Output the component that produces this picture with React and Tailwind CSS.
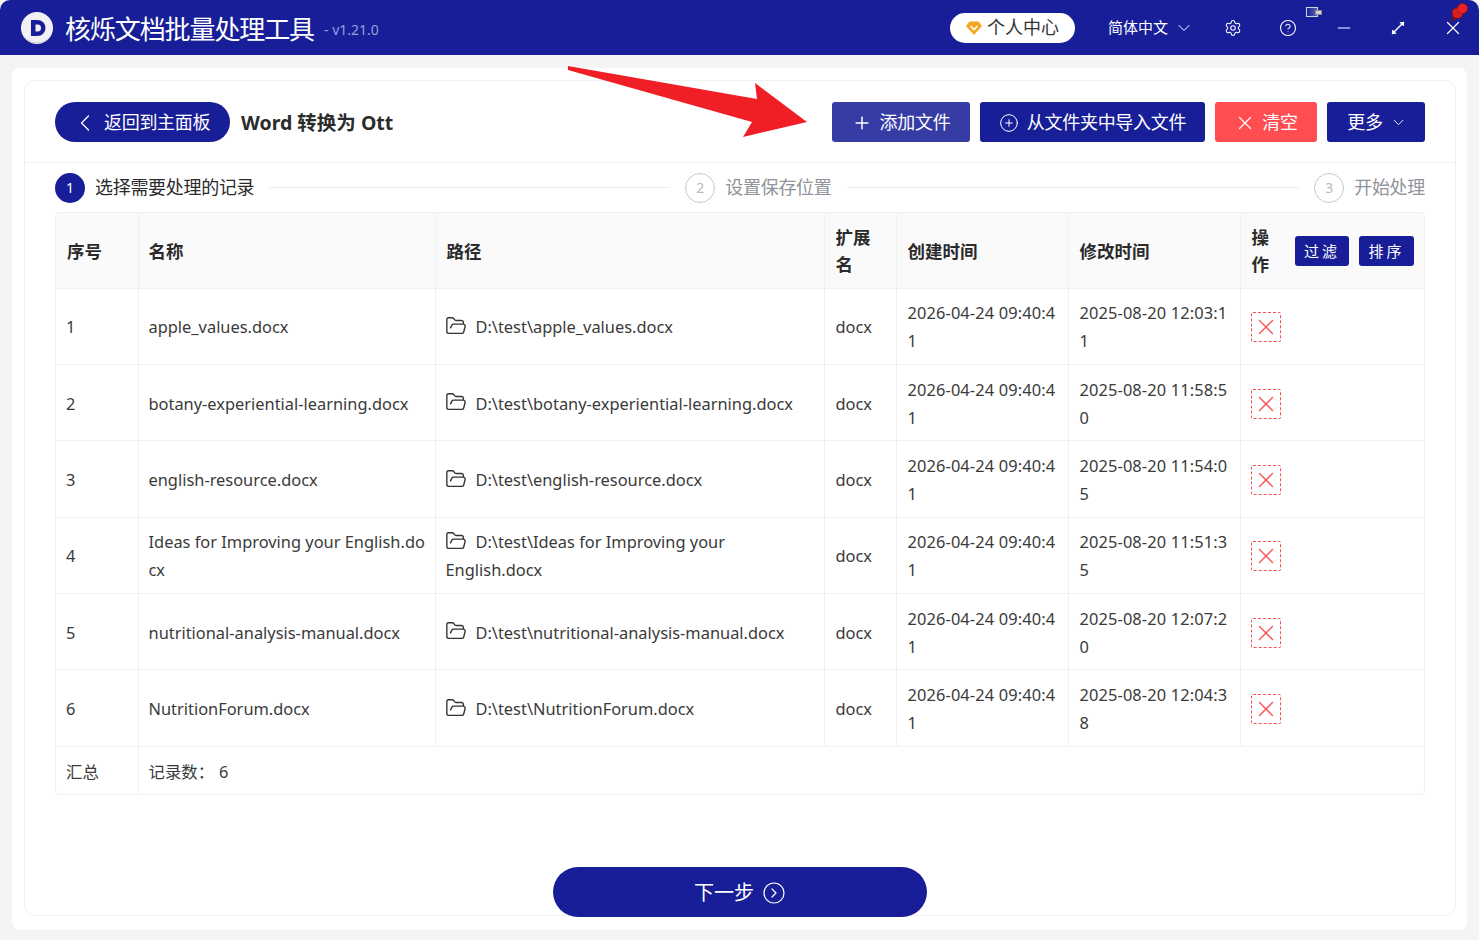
import { ChevronLeft, ChevronDown, Settings, CircleHelp, Minus, X, Plus, CirclePlus, FolderOpen, CircleChevronRight } from 'lucide-react'

const FONT = 'font-["Noto_Sans","Noto_Sans_CJK_SC",sans-serif]'

const rows = [
  { id: 1, name: 'apple_values.docx', path: 'D:\\test\\apple_values.docx', created: '2026-04-24 09:40:41', modified: '2025-08-20 12:03:11' },
  { id: 2, name: 'botany-experiential-learning.docx', path: 'D:\\test\\botany-experiential-learning.docx', created: '2026-04-24 09:40:41', modified: '2025-08-20 11:58:50' },
  { id: 3, name: 'english-resource.docx', path: 'D:\\test\\english-resource.docx', created: '2026-04-24 09:40:41', modified: '2025-08-20 11:54:05' },
  { id: 4, name: 'Ideas for Improving your English.docx', path: 'D:\\test\\Ideas for Improving your English.docx', created: '2026-04-24 09:40:41', modified: '2025-08-20 11:51:35' },
  { id: 5, name: 'nutritional-analysis-manual.docx', path: 'D:\\test\\nutritional-analysis-manual.docx', created: '2026-04-24 09:40:41', modified: '2025-08-20 12:07:20' },
  { id: 6, name: 'NutritionForum.docx', path: 'D:\\test\\NutritionForum.docx', created: '2026-04-24 09:40:41', modified: '2025-08-20 12:04:38' },
]

function Logo() {
  return (
    <svg width="34" height="34" viewBox="0 0 34 34" className="shrink-0">
      <circle cx="17" cy="17" r="16" fill="#f1f1f4" />
      <path d="M3 24a16 16 0 0 0 28 0a17 17 0 0 1-28 0z" fill="#c9c9d0" />
      <path d="M11 9h6.5a8 8 0 0 1 0 16H11z" fill="#181e97" />
      <path d="M15.5 13.5h2a3.5 3.5 0 0 1 0 7h-2z" fill="#f1f1f4" />
    </svg>
  )
}

function Step({ n, label, active }) {
  return (
    <div className="flex items-center shrink-0">
      <div className={`w-[30px] h-[30px] rounded-full flex items-center justify-center text-[14px] ${active ? 'bg-[#181e97] text-white' : 'border border-[#c8c8c8] text-[#bbbbbb]'}`}>{n}</div>
      <span className={`ml-[10px] text-[18px] tracking-[-0.3px] ${active ? 'text-[#2b2b2b]' : 'text-[#909399]'}`}>{label}</span>
    </div>
  )
}

export default function App() {
  const th = 'border-r border-[#f0f0f0] pr-[10px] pt-[2px] text-left font-bold text-[17.5px] text-[#2b2b2b] leading-[27px]'
  const cell = 'border-r border-t border-[#f0f0f0] pt-[2px] align-middle leading-[28px] text-[16.4px] text-[#3a3a3a]'
  const td = `${cell} pl-[10px] pr-[10px] break-all`
  const dateTd = `${cell} pl-[11px] pr-[10px] break-all tracking-[0.12px]`

  return (
    <div className={`relative w-[1479px] h-[940px] overflow-hidden bg-[#f4f4f4] flex flex-col ${FONT}`}>
      {/* title bar */}
      <div className="h-[55px] shrink-0 bg-[#181e97] rounded-t-[10px] flex items-center pl-[20px] text-white">
        <Logo />
        <span className="ml-[11px] mt-[3px] text-[26px] tracking-[-1.1px]">核烁文档批量处理工具</span>
        <span className="ml-[10px] mt-[3px] text-[14px] text-[#8fa3d8]">- v1.21.0</span>
        <div className="ml-auto flex items-center">
          <div className="w-[125px] h-[30px] rounded-full bg-white flex items-center justify-center text-[18px] text-[#333333] mr-[33px]">
            <svg width="16" height="14" viewBox="0 0 16 14" className="mr-[5px]">
              <path d="M3.5 0.5h9L16 5l-8 9-8-9z" fill="#f5a623" />
              <path d="M4.5 5L8 8.5 11.5 5" fill="none" stroke="#fff" strokeWidth="1.6" />
            </svg>
            个人中心
          </div>
          <span className="text-[15px]">简体中文</span>
          <ChevronDown size={20} strokeWidth={1.2} className="ml-[6px] mr-[30px]" />
          <Settings size={18} strokeWidth={1.4} className="mr-[37px]" />
          <CircleHelp size={18} strokeWidth={1.4} className="mr-[37px]" />
          <Minus size={20} strokeWidth={1.3} className="mr-[37px]" />
          <svg width="14" height="14" viewBox="0 0 14 14" className="mr-[37px]" fill="none" stroke="#fff" strokeWidth="1.4">
            <path d="M1 13L13 1" />
            <path d="M9 1.5h3.5V5zM1.5 9v3.5H5z" fill="#fff" strokeWidth="0.8" />
          </svg>
          <X size={22} strokeWidth={1.3} className="mr-[15px]" />
        </div>
      </div>

      {/* small tray marks over the title bar */}
      <div className="absolute left-[1306px] top-[7px] w-[12px] h-[10px] border border-[#d4d4d8] bg-gradient-to-r from-[#181e97] to-[#5a60b8]" />
      <div className="absolute left-[1315px] top-[10px] w-[7px] h-[5px] bg-[#d4d4d8] border border-[#8a8a8a]" />
      <svg width="19" height="19" viewBox="0 0 19 19" className="absolute left-[1450px] top-[3px]">
        <path d="M6 17L1 18l1.5-5z" fill="#7a1010" />
        <circle cx="7.5" cy="10" r="5.5" fill="#d81e1e" stroke="#6e1010" strokeWidth="0.7" />
        <circle cx="12.5" cy="5.5" r="5" fill="#ee2222" stroke="#8a1515" strokeWidth="0.7" />
      </svg>

      {/* panel */}
      <div className="mt-[13px] ml-[12px] mr-[12px] h-[862px] bg-white rounded-[8px] pl-[12px] pr-[11px] pt-[12px] pb-[14px]">
        <div className="h-full border border-[#f0f0f0] rounded-[10px] flex flex-col">
          {/* toolbar */}
          <div className="h-[82px] shrink-0 border-b border-[#f0f0f0] flex items-center pl-[30px] pr-[30px]">
            <button className="w-[175px] h-[40px] pt-[2px] pl-[16px] rounded-full bg-[#181e97] text-white flex items-center text-[18px] tracking-[-0.3px]">
              <ChevronLeft size={28} strokeWidth={1.1} className="mr-[5px]" />
              返回到主面板
            </button>
            <span className="ml-[11px] mt-[2px] text-[19.5px] font-bold text-[#2b2b2b]">Word 转换为 Ott</span>
            <div className="ml-auto flex items-center gap-[10px] text-white text-[18px] tracking-[-0.3px]">
              <button className="w-[138px] h-[40px] pt-[2px] rounded-[3px] bg-[#363ca4] flex items-center justify-center">
                <Plus size={20} strokeWidth={1.8} className="mr-[8px]" />
                添加文件
              </button>
              <button className="w-[225px] h-[40px] pt-[2px] rounded-[3px] bg-[#181e97] flex items-center justify-center">
                <CirclePlus size={20} strokeWidth={1.2} className="mr-[8px]" />
                从文件夹中导入文件
              </button>
              <button className="w-[102px] h-[40px] pt-[2px] rounded-[3px] bg-[#ff4d52] flex items-center justify-center">
                <X size={22} strokeWidth={1.3} className="mr-[6px]" />
                清空
              </button>
              <button className="w-[98px] h-[40px] pt-[2px] pl-[2px] rounded-[3px] bg-[#181e97] flex items-center justify-center">
                更多
                <ChevronDown size={17} strokeWidth={1.3} className="ml-[7px]" />
              </button>
            </div>
          </div>

          {/* steps */}
          <div className="h-[49px] shrink-0 flex items-center pl-[30px] pr-[30px]">
            <Step n="1" label="选择需要处理的记录" active />
            <div className="h-px bg-[#eeeeee] ml-[15px] mr-[15px] w-[401px]" />
            <Step n="2" label="设置保存位置" />
            <div className="h-px bg-[#eeeeee] ml-[15px] mr-[15px] flex-1" />
            <Step n="3" label="开始处理" />
          </div>

          {/* table */}
          <div className="mx-[30px] border border-[#f0f0f0] rounded-[4px] overflow-hidden">
            <table className="w-full table-fixed border-collapse">
              <colgroup>
                <col className="w-[82px]" />
                <col className="w-[297px]" />
                <col className="w-[389px]" />
                <col className="w-[72px]" />
                <col className="w-[172px]" />
                <col className="w-[172px]" />
                <col />
              </colgroup>
              <thead>
                <tr className="h-[75px] bg-[#fafafa]">
                  <th className={`${th} pl-[11px]`}>序号</th>
                  <th className={`${th} pl-[10px]`}>名称</th>
                  <th className={`${th} pl-[11px]`}>路径</th>
                  <th className={`${th} pl-[11px]`}><span className="block w-[36px]">扩展名</span></th>
                  <th className={`${th} pl-[11px]`}>创建时间</th>
                  <th className={`${th} pl-[11px]`}>修改时间</th>
                  <th className={`${th} pl-[10px] border-r-0`}>
                    <div className="flex items-center justify-between">
                      <span className="w-[18px] ml-px">操作</span>
                      <div className="flex gap-[10px]">
                        <button className="w-[54px] h-[30px] rounded-[3px] bg-[#181e97] text-white text-[15px] font-normal tracking-[3px]">过滤</button>
                        <button className="w-[55px] h-[30px] rounded-[3px] bg-[#181e97] text-white text-[15px] font-normal tracking-[3px]">排序</button>
                      </div>
                    </div>
                  </th>
                </tr>
              </thead>
              <tbody>
                {rows.map((r) => (
                  <tr key={r.id} className="h-[76.4px]">
                    <td className={td}>{r.id}</td>
                    <td className={`${cell} pl-[10px] pr-[6px] break-all`}>{r.name}</td>
                    <td className={`${cell} pl-[10px] pr-[10px]`}>
                      <FolderOpen size={22} strokeWidth={1.5} className="inline-block -ml-px mr-[9px] -mt-[6px] text-[#333333]" />
                      {r.path}
                    </td>
                    <td className={`${cell} pl-[11px] pr-[10px]`}>docx</td>
                    <td className={dateTd}>{r.created}</td>
                    <td className={dateTd}>{r.modified}</td>
                    <td className={`${cell} pl-[10px] pr-[10px] border-r-0`}>
                      <button className="w-[30px] h-[30px] rounded-[2px] border border-dashed border-[#ff4d52] flex items-center justify-center">
                        <X size={26} strokeWidth={1.2} className="text-[#ff4d52]" />
                      </button>
                    </td>
                  </tr>
                ))}
                <tr className="h-[48px]">
                  <td className={td}>汇总</td>
                  <td className={`${td} border-r-0`} colSpan={6}>记录数：<span className="ml-[5px]">6</span></td>
                </tr>
              </tbody>
            </table>
          </div>

          {/* next */}
          <div className="mt-auto -mb-[2px] flex justify-center">
            <button className="w-[374px] h-[50px] pt-px rounded-full bg-[#181e97] text-white text-[20px] flex items-center justify-center">
              下一步
              <CircleChevronRight size={24} strokeWidth={1.2} className="ml-[8px]" />
            </button>
          </div>
        </div>
      </div>

      {/* red arrow annotation */}
      <svg width="250" height="80" viewBox="0 0 250 80" className="absolute left-[565px] top-[63px]">
        <path d="M3 3L192 36L190 20L242 59L178 74L187 59L3 7Z" fill="#f01f26" />
      </svg>
    </div>
  )
}
